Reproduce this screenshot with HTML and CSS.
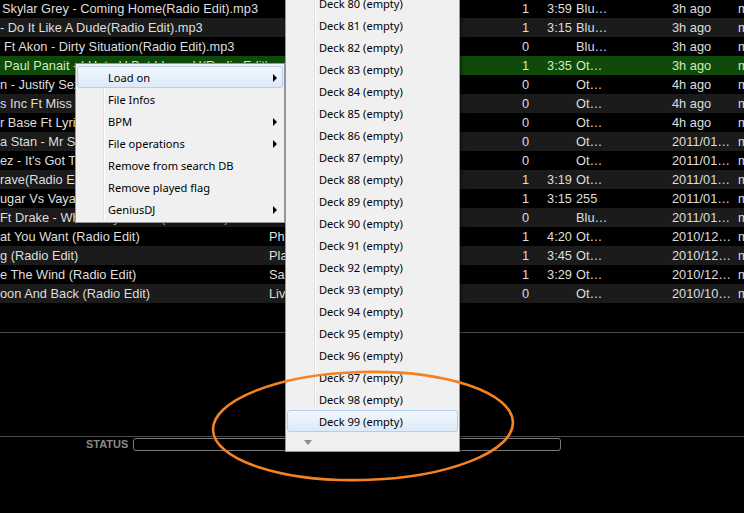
FILE: index.html
```html
<!DOCTYPE html>
<html lang="en">
<head>
    <meta charset="UTF-8">
    <title>Browser - Load on</title>
    <link rel="stylesheet" href="styles.css">
</head>
<body>
    <div class="list">
        <div class="row"><span class="c-title ind">Skylar Grey - Coming Home(Radio Edit).mp3</span><span class="c-artist"></span><span class="c-plays">1</span><span class="c-len">3:59</span><span class="c-genre">Blu…</span><span class="c-date">3h ago</span><span class="c-type">mp3</span></div>
        <div class="row"><span class="c-title">- Do It Like A Dude(Radio Edit).mp3</span><span class="c-artist"></span><span class="c-plays">1</span><span class="c-len">3:15</span><span class="c-genre">Blu…</span><span class="c-date">3h ago</span><span class="c-type">mp3</span></div>
        <div class="row"><span class="c-title ind2">Ft Akon - Dirty Situation(Radio Edit).mp3</span><span class="c-artist"></span><span class="c-plays">0</span><span class="c-len"></span><span class="c-genre">Blu…</span><span class="c-date">3h ago</span><span class="c-type">mp3</span></div>
        <div class="row selected"><span class="c-title ind2">Paul Panait - I Hate U But I Love U(Radio Edit).mp3</span><span class="c-artist"></span><span class="c-plays">1</span><span class="c-len">3:35</span><span class="c-genre">Ot…</span><span class="c-date">3h ago</span><span class="c-type">mp3</span></div>
        <div class="row"><span class="c-title">n - Justify Sex (Radio Edit)</span><span class="c-artist">Sean</span><span class="c-plays">0</span><span class="c-len"></span><span class="c-genre">Ot…</span><span class="c-date">4h ago</span><span class="c-type">mp3</span></div>
        <div class="row"><span class="c-title">s Inc Ft Miss (Radio Edit)</span><span class="c-artist">Star</span><span class="c-plays">0</span><span class="c-len"></span><span class="c-genre">Ot…</span><span class="c-date">4h ago</span><span class="c-type">mp3</span></div>
        <div class="row"><span class="c-title">r Base Ft Lyrical (Radio Edit)</span><span class="c-artist">Ace</span><span class="c-plays">0</span><span class="c-len"></span><span class="c-genre">Ot…</span><span class="c-date">4h ago</span><span class="c-type">mp3</span></div>
        <div class="row"><span class="c-title">a Stan - Mr Saxobeat (Radio Edit)</span><span class="c-artist">Alex</span><span class="c-plays">0</span><span class="c-len"></span><span class="c-genre">Ot…</span><span class="c-date">2011/01…</span><span class="c-type">mp3</span></div>
        <div class="row"><span class="c-title">ez - It's Got To Be (Radio Edit)</span><span class="c-artist">Lopez</span><span class="c-plays">0</span><span class="c-len"></span><span class="c-genre">Ot…</span><span class="c-date">2011/01…</span><span class="c-type">mp3</span></div>
        <div class="row"><span class="c-title">rave(Radio Edit)</span><span class="c-artist">Dave</span><span class="c-plays">1</span><span class="c-len">3:19</span><span class="c-genre">Ot…</span><span class="c-date">2011/01…</span><span class="c-type">mp3</span></div>
        <div class="row"><span class="c-title">ugar Vs Vaya Con Dios (Radio Edit)</span><span class="c-artist">Sugar</span><span class="c-plays">1</span><span class="c-len">3:15</span><span class="c-genre">255</span><span class="c-date">2011/01…</span><span class="c-type">mp3</span></div>
        <div class="row"><span class="c-title">Ft Drake - What's My Name (Radio Edit)</span><span class="c-artist">Rihanna</span><span class="c-plays">0</span><span class="c-len"></span><span class="c-genre">Blu…</span><span class="c-date">2011/01…</span><span class="c-type">mp3</span></div>
        <div class="row"><span class="c-title">at You Want (Radio Edit)</span><span class="c-artist">Phil</span><span class="c-plays">1</span><span class="c-len">4:20</span><span class="c-genre">Ot…</span><span class="c-date">2010/12…</span><span class="c-type">mp3</span></div>
        <div class="row"><span class="c-title">g (Radio Edit)</span><span class="c-artist">Play</span><span class="c-plays">1</span><span class="c-len">3:45</span><span class="c-genre">Ot…</span><span class="c-date">2010/12…</span><span class="c-type">mp3</span></div>
        <div class="row"><span class="c-title">e The Wind (Radio Edit)</span><span class="c-artist">Sasha</span><span class="c-plays">1</span><span class="c-len">3:29</span><span class="c-genre">Ot…</span><span class="c-date">2010/12…</span><span class="c-type">mp3</span></div>
        <div class="row"><span class="c-title">oon And Back (Radio Edit)</span><span class="c-artist">Livin</span><span class="c-plays">0</span><span class="c-len"></span><span class="c-genre">Ot…</span><span class="c-date">2010/10…</span><span class="c-type">mp3</span></div>
    </div>

    <div class="info-panel"></div>

    <div class="status-bar">
        <span class="status-label">STATUS</span>
        <div class="status-box"></div>
    </div>

    <!-- right-click menu -->
    <div class="menu context-menu">
        <div class="menu-item hot has-sub">Load on</div>
        <div class="menu-item">File Infos</div>
        <div class="menu-item has-sub">BPM</div>
        <div class="menu-item has-sub">File operations</div>
        <div class="menu-item">Remove from search DB</div>
        <div class="menu-item">Remove played flag</div>
        <div class="menu-item has-sub">GeniusDJ</div>
    </div>

    <div class="menu deck-menu">
        <div class="menu-item">Deck 80 (empty)</div>
        <div class="menu-item">Deck 81 (empty)</div>
        <div class="menu-item">Deck 82 (empty)</div>
        <div class="menu-item">Deck 83 (empty)</div>
        <div class="menu-item">Deck 84 (empty)</div>
        <div class="menu-item">Deck 85 (empty)</div>
        <div class="menu-item">Deck 86 (empty)</div>
        <div class="menu-item">Deck 87 (empty)</div>
        <div class="menu-item">Deck 88 (empty)</div>
        <div class="menu-item">Deck 89 (empty)</div>
        <div class="menu-item">Deck 90 (empty)</div>
        <div class="menu-item">Deck 91 (empty)</div>
        <div class="menu-item">Deck 92 (empty)</div>
        <div class="menu-item">Deck 93 (empty)</div>
        <div class="menu-item">Deck 94 (empty)</div>
        <div class="menu-item">Deck 95 (empty)</div>
        <div class="menu-item">Deck 96 (empty)</div>
        <div class="menu-item">Deck 97 (empty)</div>
        <div class="menu-item">Deck 98 (empty)</div>
        <div class="menu-item hot">Deck 99 (empty)</div>
        <div class="scroll-down"></div>
    </div>

    <svg class="mark" width="744" height="513" viewBox="0 0 744 513">
        <ellipse cx="363" cy="426" rx="150" ry="54" fill="none" stroke="#f58220" stroke-width="2.6" transform="rotate(-1.5 363 426)"/>
    </svg>
</body>
</html>
```

FILE: styles.css
```css
html, body {
    margin: 0;
    width: 744px;
    height: 513px;
    overflow: hidden;
    background: #000;
}
body {
    font-family: "Liberation Sans", Arial, sans-serif;
    font-size: 12.8px;
    color: #dedede;
}

.list {
    margin-top: -1px;
    height: 333px;
}
.row {
    display: grid;
    grid-template-columns: 267px 247px 15px 43px 96px 66px 60px;
    height: 19px;
    line-height: 19px;
    white-space: nowrap;
}
.row:nth-child(even) {
    background: #1b1b1b;
}
.row.selected {
    background: #0f4a0b;
    color: #cbeeb6;
}
.row span {
    overflow: hidden;
}
.c-title.ind { padding-left: 2px; }
.c-title.ind2 { padding-left: 4px; }
.c-artist { padding-left: 2px; }
.c-plays, .c-len { text-align: right; }
.c-genre, .c-date, .c-type { padding-left: 4px; }

.info-panel {
    height: 103px;
    border-top: 1px solid #4c4c4c;
    border-bottom: 1px solid #4c4c4c;
}

.status-bar {
    display: flex;
    align-items: center;
    height: 14px;
    padding-left: 86px;
}
.status-label {
    font-size: 11px;
    font-weight: bold;
    color: #8a8a8a;
    margin-right: 5px;
}
.status-box {
    width: 426px;
    height: 11px;
    border: 1px solid #7a7a7a;
    border-radius: 3px;
}

/* windows style popup menus */
.menu {
    position: absolute;
    background: #f0f0f0;
    border: 1px solid #979797;
    box-shadow: 2px 2px 3px rgba(0, 0, 0, 0.4);
    font-family: "Noto Sans", "Liberation Sans", sans-serif;
    font-size: 11.1px;
    color: #000;
}
.menu::before {
    content: "";
    position: absolute;
    top: 2px;
    bottom: 2px;
    border-left: 1px solid #e0e0e0;
    border-right: 1px solid #fff;
}
.menu-item {
    position: relative;
    height: 22px;
    line-height: 22px;
    white-space: nowrap;
    border: 1px solid transparent;
    box-sizing: border-box;
    border-radius: 3px;
}
.menu-item.hot {
    background: linear-gradient(#f2f7fd, #dce9f8);
    border-color: #b4cfee;
}
.has-sub::after {
    content: "";
    position: absolute;
    right: 5px;
    top: 7px;
    border-left: 4px solid #000;
    border-top: 4px solid transparent;
    border-bottom: 4px solid transparent;
}

.context-menu {
    left: 75px;
    top: 63px;
    width: 208px;
    padding: 2px 0 2px;
}
.context-menu::before {
    left: 27px;
}
.context-menu .menu-item {
    margin: 0 1px;
    padding-left: 30px;
}

.deck-menu {
    left: 285px;
    top: -11px;
    width: 173px;
    padding-top: 2px;
}
.deck-menu::before {
    left: 28px;
    bottom: 20px;
}
.deck-menu .menu-item {
    margin: 0 1px;
    padding-left: 31px;
}
.scroll-down {
    position: relative;
    height: 19px;
}
.scroll-down::after {
    content: "";
    position: absolute;
    left: 18px;
    top: 8px;
    border-top: 5px solid #8c8c8c;
    border-left: 4px solid transparent;
    border-right: 4px solid transparent;
}

.mark {
    position: absolute;
    left: 0;
    top: 0;
    pointer-events: none;
}
```
